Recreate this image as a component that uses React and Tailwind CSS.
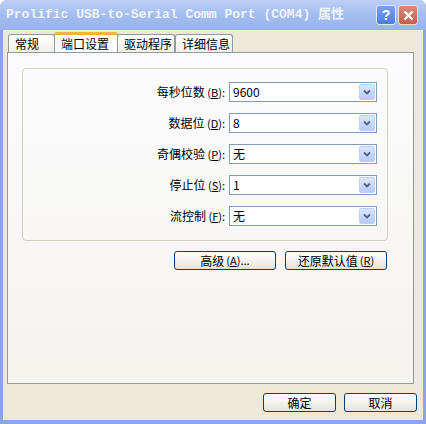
import React from "react";

const cjk = { fontFamily: '"Noto Sans CJK SC", "Liberation Sans", sans-serif' };

function Combo({ value }) {
  return (
    <div className="w-[148px] h-[20px] border border-[#7f9db9] bg-white flex items-center">
      <span className="flex-1 pl-[3px] text-[12px] leading-none text-black">{value}</span>
      <div className="w-[16px] h-[16px] mr-[1px] rounded-[2px] bg-gradient-to-b from-[#dce6fd] to-[#b7cbf8] border border-[#bccdf6] flex items-center justify-center">
        <svg width="8" height="6" viewBox="0 0 8 6">
          <path d="M1 1.5 L4 4.5 L7 1.5" stroke="#4d6185" strokeWidth="1.8" fill="none" />
        </svg>
      </div>
    </div>
  );
}

function Row({ label, k, value }) {
  return (
    <div className="flex items-center h-[20px]">
      <div className="w-[206px] pr-[4px] text-right text-[12px] text-black">
        {label}
        <span className="text-[11px]"> (<u>{k}</u>):</span>
      </div>
      <Combo value={value} />
    </div>
  );
}

function Btn({ children, w }) {
  return (
    <button
      className={`${w} h-[19px] rounded-[3px] border border-[#003c74] bg-gradient-to-b from-white to-[#e6e4dc] text-[12px] leading-none text-black flex items-center justify-center`}
    >
      {children}
    </button>
  );
}

export default function App() {
  const tabs = [
    { t: "常规", w: "w-[47px]" },
    { t: "端口设置", w: "w-[64px]", active: true },
    { t: "驱动程序", w: "w-[58px]" },
    { t: "详细信息", w: "w-[58px]" },
  ];
  return (
    <div className="w-[426px] h-[424px] bg-[#8aa6e8] rounded-t-[7px] flex flex-col overflow-hidden" style={cjk}>
      {/* title bar */}
      <div className="h-[30px] shrink-0 bg-gradient-to-b from-[#bcd0f6] via-[#a4bdf0] to-[#98b3ea] flex items-center pl-[6px] pr-[8px]">
        <span
          className="flex-1 text-[13px] font-bold text-[#eef3fc] whitespace-nowrap"
          style={{ fontFamily: '"Liberation Mono", "Noto Sans CJK SC", monospace' }}
        >
          Prolific USB-to-Serial Comm Port (COM4) 属性
        </span>
        <div className="flex gap-[2px]">
          <div className="w-[20px] h-[20px] rounded-[3px] bg-gradient-to-b from-[#7aa2f0] to-[#4d7ee0] border border-[#dfe8fb] flex items-center justify-center text-white font-bold text-[14px] leading-none" style={{ fontFamily: '"Liberation Sans", sans-serif' }}>
            ?
          </div>
          <div className="w-[20px] h-[20px] rounded-[3px] bg-gradient-to-b from-[#d9897b] to-[#c2604f] border border-[#f3dcd6] flex items-center justify-center">
            <svg width="11" height="11" viewBox="0 0 11 11">
              <path d="M1.5 1.5 L9.5 9.5 M9.5 1.5 L1.5 9.5" stroke="white" strokeWidth="2.2" />
            </svg>
          </div>
        </div>
      </div>

      {/* body */}
      <div className="flex-1 mx-[3px] mb-[4px] bg-[#ece9d8] flex flex-col">
        {/* tabs */}
        <div className="flex items-end h-[22px] pl-[5px] pt-[2px]">
          {tabs.map((tab) =>
            tab.active ? (
              <div key={tab.t} className={`${tab.w} h-[20px] pl-[6px] -mx-[1px] relative z-10 bg-[#fcfcfe] border-x border-[#919b9c] border-t-[3px] border-t-[#f4b53c] rounded-t-[3px] flex items-center text-[12px] text-black`}>
                {tab.t}
              </div>
            ) : (
              <div key={tab.t} className={`${tab.w} h-[18px] pl-[6px] bg-gradient-to-b from-white to-[#f0efe8] border-x border-t border-[#919b9c] rounded-t-[3px] flex items-center text-[12px] text-black`}>
                {tab.t}
              </div>
            )
          )}
        </div>

        {/* panel */}
        <div className="ml-[4px] w-[407px] h-[332px] border border-[#919b9c] bg-gradient-to-b from-[#fcfcfe] to-[#f4f3ee] pt-[15px] pl-[14px]">
          <div className="w-[366px] h-[173px] border border-[#d0d0bf] rounded-[4px] pt-[13px] flex flex-col gap-[11px]">
            <Row label="每秒位数" k="B" value="9600" />
            <Row label="数据位" k="D" value="8" />
            <Row label="奇偶校验" k="P" value="无" />
            <Row label="停止位" k="S" value="1" />
            <Row label="流控制" k="F" value="无" />
          </div>
          <div className="w-[366px] flex justify-end gap-[9px] mt-[10px] pr-[1px]">
            <Btn w="w-[102px]">
              高级 <span className="text-[11px] ml-[2px]">(<u>A</u>)...</span>
            </Btn>
            <Btn w="w-[102px]">
              还原默认值 <span className="text-[11px] ml-[2px]">(<u>R</u>)</span>
            </Btn>
          </div>
        </div>

        {/* footer buttons */}
        <div className="flex justify-end gap-[8px] mt-[9px] pr-[6px]">
          <Btn w="w-[73px]">确定</Btn>
          <Btn w="w-[73px]">取消</Btn>
        </div>
      </div>
    </div>
  );
}
